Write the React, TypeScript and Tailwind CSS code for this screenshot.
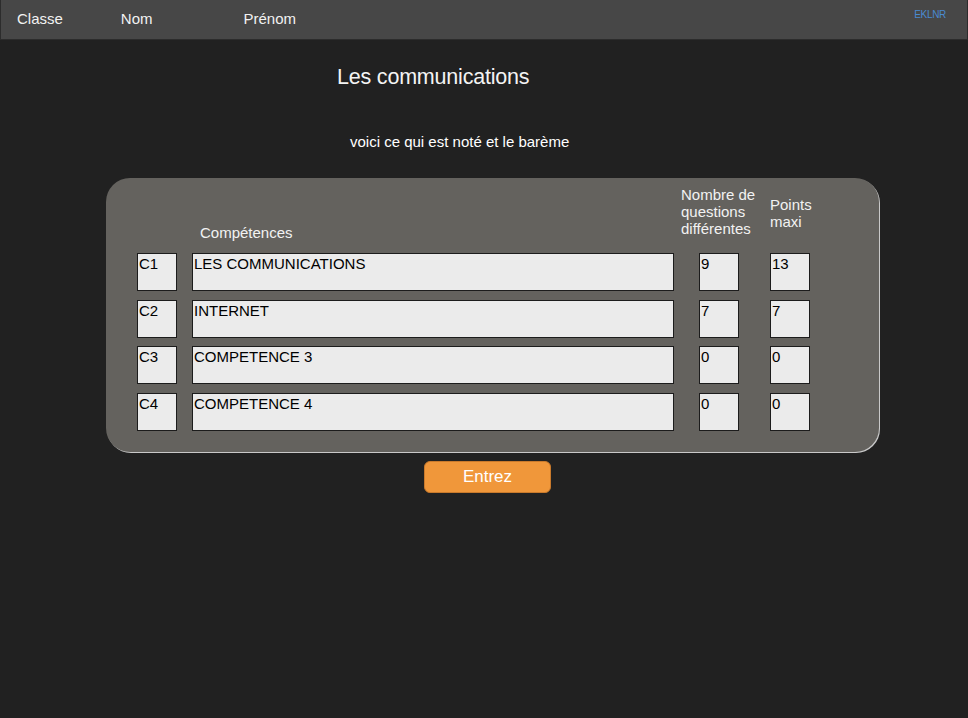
const rows = [
  { code: 'C1', name: 'LES COMMUNICATIONS', q: '9', pts: '13' },
  { code: 'C2', name: 'INTERNET', q: '7', pts: '7' },
  { code: 'C3', name: 'COMPETENCE 3', q: '0', pts: '0' },
  { code: 'C4', name: 'COMPETENCE 4', q: '0', pts: '0' },
]

function Cell({ value, width }: { value: string; width: string }) {
  return (
    <div className={`${width} h-[38px] shrink-0 border-[1.5px] border-[#1c1c1c] bg-[#ebebeb] px-[1px] pt-[1px] text-[15px] leading-[17px] text-black`}>
      {value}
    </div>
  )
}

export default function App() {
  return (
    <div className="min-h-[718px] bg-[#212121] font-['Liberation_Sans',Arial,sans-serif]">
      {/* Top bar */}
      <header className="flex h-[40px] items-start border-x border-b border-[#2c2c2c] bg-[#474747] text-[15px] text-[#f2f2f2]">
        <span className="ml-[16px] mt-[8px]">Classe</span>
        <span className="ml-[58px] mt-[8px]">Nom</span>
        <span className="ml-[91px] mt-[8px]">Prénom</span>
        <span className="ml-auto mr-[21px] mt-[7px] text-[10px] tracking-[-0.3px] text-[#4a8ad0]">EKLNR</span>
      </header>

      <h1 className="pl-[337px] pt-[22px] text-[21.5px] leading-[30px] tracking-[-0.2px] text-[#f4f4f4] font-['Liberation_Sans_Narrow','Liberation_Sans',sans-serif]">
        Les communications
      </h1>

      <p className="pl-[350px] pt-[41px] text-[15px] leading-[18px] text-white">
        voici ce qui est noté et le barème
      </p>

      {/* Panel */}
      <div className="ml-[106px] mt-[27px] h-[274px] w-[773px] rounded-[24px] bg-[#64625e] pl-[31px] pt-[8px] shadow-[1px_1px_0_#c9c9c9]">
        <div className="flex h-[67px] items-start text-[15px] leading-[17px] text-[#f2f2f2]">
          <span className="ml-[63px] mt-[38px] w-[481px]">Compétences</span>
          <span className="w-[89px]">
            Nombre de
            <br />
            questions
            <br />
            différentes
          </span>
          <span className="mt-[10px]">
            Points
            <br />
            maxi
          </span>
        </div>

        <div className="flex flex-col gap-[8.5px]">
          {rows.map((r) => (
            <div key={r.code} className="flex items-start">
              <Cell value={r.code} width="w-[40px]" />
              <div className="ml-[15px]">
                <Cell value={r.name} width="w-[482px]" />
              </div>
              <div className="ml-[25px]">
                <Cell value={r.q} width="w-[40px]" />
              </div>
              <div className="ml-[31px]">
                <Cell value={r.pts} width="w-[40px]" />
              </div>
            </div>
          ))}
        </div>
      </div>

      <div className="pl-[424px] pt-[9px]">
        <button className="h-[32px] w-[127px] rounded-[6px] border border-[#c97a2c] bg-[#f0973a] text-[17px] text-white">
          Entrez
        </button>
      </div>
    </div>
  )
}
